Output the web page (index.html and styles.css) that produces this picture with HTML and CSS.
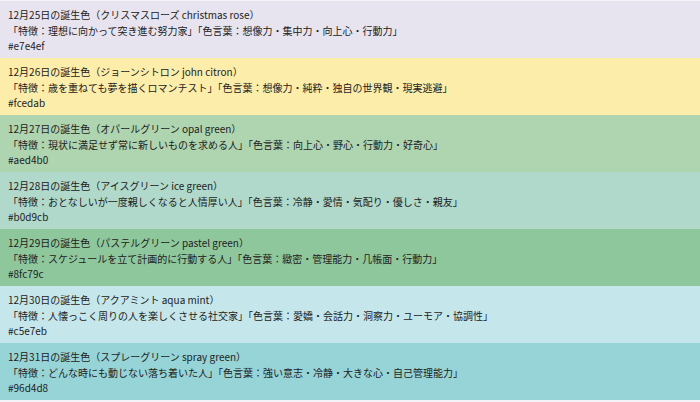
FILE: index.html
```html
<!DOCTYPE html>
<html lang="ja">
<head>
<meta charset="utf-8">
<title>12月の誕生色</title>
<link rel="stylesheet" href="styles.css">
</head>
<body>
<div class="list">
  <div class="row c1225">
    <div>12月25日の誕生色（クリスマスローズ christmas rose）</div>
    <div>「特徴：理想に向かって突き進む努力家」「色言葉：想像力・集中力・向上心・行動力」</div>
    <div>#e7e4ef</div>
  </div>
  <div class="row c1226">
    <div>12月26日の誕生色（ジョーンシトロン john citron）</div>
    <div>「特徴：歳を重ねても夢を描くロマンチスト」「色言葉：想像力・純粋・独自の世界観・現実逃避」</div>
    <div>#fcedab</div>
  </div>
  <div class="row c1227">
    <div>12月27日の誕生色（オパールグリーン opal green）</div>
    <div>「特徴：現状に満足せず常に新しいものを求める人」「色言葉：向上心・野心・行動力・好奇心」</div>
    <div>#aed4b0</div>
  </div>
  <div class="row c1228">
    <div>12月28日の誕生色（アイスグリーン ice green）</div>
    <div>「特徴：おとなしいが一度親しくなると人情厚い人」「色言葉：冷静・愛情・気配り・優しさ・親友」</div>
    <div>#b0d9cb</div>
  </div>
  <div class="row c1229">
    <div>12月29日の誕生色（パステルグリーン pastel green）</div>
    <div>「特徴：スケジュールを立て計画的に行動する人」「色言葉：緻密・管理能力・几帳面・行動力」</div>
    <div>#8fc79c</div>
  </div>
  <div class="row c1230">
    <div>12月30日の誕生色（アクアミント aqua mint）</div>
    <div>「特徴：人懐っこく周りの人を楽しくさせる社交家」「色言葉：愛嬌・会話力・洞察力・ユーモア・協調性」</div>
    <div>#c5e7eb</div>
  </div>
  <div class="row c1231">
    <div>12月31日の誕生色（スプレーグリーン spray green）</div>
    <div>「特徴：どんな時にも動じない落ち着いた人」「色言葉：強い意志・冷静・大きな心・自己管理能力」</div>
    <div>#96d4d8</div>
  </div>
</div>
</body>
</html>
```
FILE: styles.css
```css
html, body {
  margin: 0;
  padding: 0;
  background: #f4f3f8;
}
body {
  padding-top: 1px;
  font-family: "Noto Sans CJK JP", "DejaVu Sans", sans-serif;
  font-size: 10px;
  line-height: 15.5px;
  color: #222;
}
.list {
  display: flex;
  flex-direction: column;
}
.row {
  box-sizing: border-box;
  height: 57px;
  padding: 6px 8px 0 8px;
}
.c1225 { background: #e7e4ef; }
.c1226 { background: #fcedab; }
.c1227 { background: #aed4b0; }
.c1228 { background: #b0d9cb; }
.c1229 { background: #8fc79c; }
.c1230 { background: #c5e7eb; }
.c1231 { background: #96d4d8; }
```
